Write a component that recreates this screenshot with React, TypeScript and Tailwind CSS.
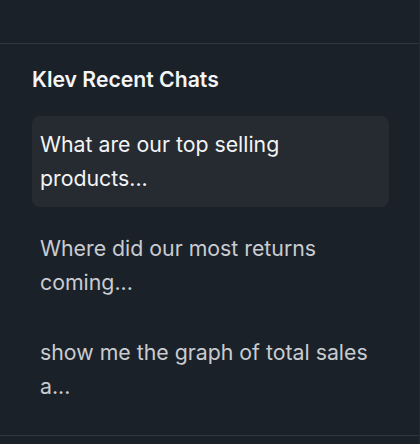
import React from 'react'

const chats = [
  { id: 1, title: 'What are our top selling products...', active: true },
  { id: 2, title: 'Where did our most returns coming...', active: false },
  { id: 3, title: 'show me the graph of total sales a...', active: false },
]

export default function App() {
  return (
    <div
      className="w-[420px] h-[444px] bg-[#1b2129] border-r border-[#232930] flex flex-col overflow-hidden"
      style={{ fontFamily: 'Inter, "Noto Sans", sans-serif' }}
    >
      <div className="h-[44px] shrink-0 border-b border-[#30363e]" />
      <div className="h-[392px] shrink-0 border-b border-[#30363e] pl-8 pr-[30px] pt-5">
        <h2 className="text-[21.2px] leading-[30px] font-semibold text-[#f4f5f6]">
          Klev Recent Chats
        </h2>
        <div className="mt-[22px] flex flex-col gap-[13px]">
          {chats.map((chat) => (
            <div
              key={chat.id}
              className={
                chat.active
                  ? 'rounded-lg bg-[#262b32] px-2 pt-[11px] pb-[12px] text-[21.3px] leading-[34px] text-[#f3f4f5]'
                  : 'rounded-lg px-2 pt-[11px] pb-[12px] text-[21.3px] leading-[34px] text-[#c9ccd0]'
              }
            >
              {chat.title}
            </div>
          ))}
        </div>
      </div>
    </div>
  )
}
